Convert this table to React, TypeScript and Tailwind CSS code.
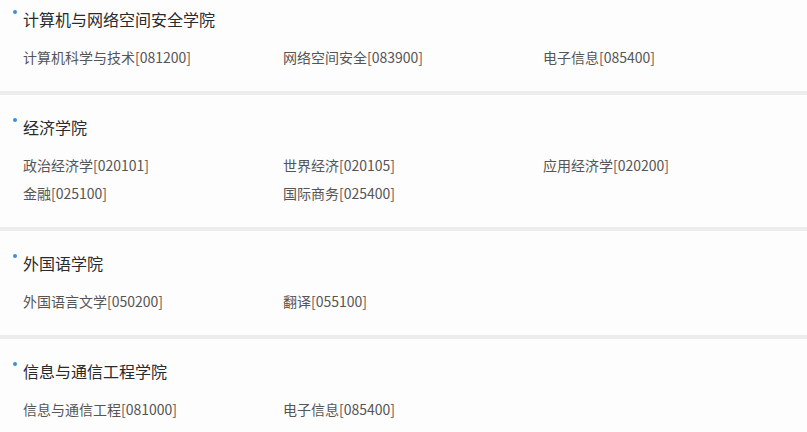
import React from "react";

const data: { name: string; items: string[] }[] = [
  { name: "计算机与网络空间安全学院", items: ["计算机科学与技术[081200]", "网络空间安全[083900]", "电子信息[085400]"] },
  { name: "经济学院", items: ["政治经济学[020101]", "世界经济[020105]", "应用经济学[020200]", "金融[025100]", "国际商务[025400]"] },
  { name: "外国语学院", items: ["外国语言文学[050200]", "翻译[055100]"] },
  { name: "信息与通信工程学院", items: ["信息与通信工程[081000]", "电子信息[085400]"] },
];

export default function App() {
  return (
    <div
      className="w-[807px] h-[432px] overflow-hidden bg-[#ececec]"
      style={{ fontFamily: '"Noto Sans CJK SC", "Noto Sans", sans-serif' }}
    >
      <div className="flex flex-col gap-[4px] -mt-[13px]">
        {data.map((s) => (
          <section key={s.name} className="bg-[#fdfdfe] pt-[21px] pb-[20px]">
            <div className="relative pl-[23px] h-[22px] leading-[22px] text-[16px] text-[#2a2a2a]">
              <span className="absolute left-[13px] top-[2px] w-[4px] h-[4px] rounded-full bg-[#3d8ed8]" />
              {s.name}
            </div>
            <div className="grid grid-cols-[260px_260px_260px] pl-[23px] mt-[13px]">
              {s.items.map((it) => (
                <div key={it} className="h-[28px] leading-[28px] text-[14px] text-[#555]">
                  {it}
                </div>
              ))}
            </div>
          </section>
        ))}
      </div>
    </div>
  );
}
